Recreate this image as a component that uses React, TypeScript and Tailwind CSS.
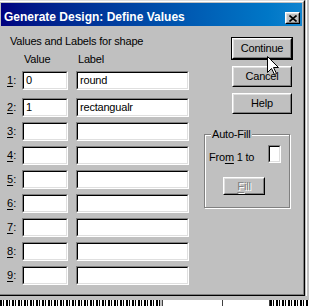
import React from "react";

const font = { fontFamily: '"Liberation Sans", Arial, sans-serif' };

function Sunken({ className, children }: { className: string; children?: React.ReactNode }) {
  return (
    <div className={`border border-t-[#808080] border-l-[#808080] border-r-white border-b-white ${className}`}>
      <div className="h-full w-full border border-t-black border-l-black border-r-[#dfdfdf] border-b-[#dfdfdf] bg-white pl-[2px] text-[11px] leading-[15px] tracking-[-0.2px] text-black">
        {children}
      </div>
    </div>
  );
}

function Raised({ className, children }: { className: string; children?: React.ReactNode }) {
  return (
    <div className={`border border-t-white border-l-white border-r-black border-b-black ${className}`}>
      <div className="flex h-full w-full items-center justify-center border border-t-[#dfdfdf] border-l-[#dfdfdf] border-r-[#808080] border-b-[#808080] bg-[#c0c0c0] text-[11px] leading-[11px] tracking-[-0.2px] text-black">
        {children}
      </div>
    </div>
  );
}

const rows = [
  { n: "1", v: "0", l: "round" },
  { n: "2", v: "1", l: "rectangualr" },
  { n: "3", v: "", l: "" },
  { n: "4", v: "", l: "" },
  { n: "5", v: "", l: "" },
  { n: "6", v: "", l: "" },
  { n: "7", v: "", l: "" },
  { n: "8", v: "", l: "" },
  { n: "9", v: "", l: "" },
];

function Row({ n, v, l }: { n: string; v: string; l: string }) {
  return (
    <div className="flex h-[19px] items-center">
      <div className="ml-[6px] w-[15px] text-[11px] leading-[11px] text-black">
        <span className="underline underline-offset-[2px]">{n}</span>:
      </div>
      <Sunken className="h-[19px] w-[46px]">{v}</Sunken>
      <Sunken className="ml-[8px] h-[19px] w-[113px]">{l}</Sunken>
    </div>
  );
}

const dots = "bg-[repeating-linear-gradient(90deg,#000_0px,#000_2px,#fff_2px,#fff_3px,#000_3px,#000_4px,#fff_4px,#fff_6px)]";

export default function App() {
  return (
    <div className="relative flex h-[306px] w-[309px] flex-col overflow-hidden bg-[#c0c0c0]" style={font}>
      <div className="flex h-[296px]">
        {/* Dialog */}
        <div className="-ml-[2px] h-[296px] w-[307px] shrink-0 border border-t-[#dfdfdf] border-l-[#dfdfdf] border-r-black border-b-black">
          <div className="flex h-full w-full flex-col border border-t-white border-l-white border-r-[#808080] border-b-[#808080] p-px">
            {/* Title bar */}
            <div className="flex h-[23px] items-start justify-between bg-gradient-to-r from-[#000080] to-[#1084d0]">
              <div className="ml-[3px] mt-[8px] text-[12px] font-bold leading-[12px] text-white">
                Generate Design: Define Values
              </div>
              <div className="mr-[2px] mt-[9px]">
                <Raised className="h-[12px] w-[15px]">
                  <svg width="8" height="7" viewBox="0 0 8 7">
                    <path d="M0.5 0.5 L7.5 6.5 M7.5 0.5 L0.5 6.5" stroke="black" strokeWidth="1.6" />
                  </svg>
                </Raised>
              </div>
            </div>
            {/* Body */}
            <div className="flex flex-1">
              {/* Left column */}
              <div className="flex w-[203px] flex-col">
                <div className="ml-[9px] mt-[10px] text-[11px] leading-[11px] tracking-[-0.2px] text-black">
                  Values and Labels for shape
                </div>
                <div className="mt-[7px] flex text-[11px] leading-[11px] tracking-[-0.2px] text-black">
                  <span className="ml-[23px] w-[54px]">Value</span>
                  <span>Label</span>
                </div>
                <div className="mt-[6px] flex flex-col">
                  <div className="mb-[8px]">
                    <Row {...rows[0]} />
                  </div>
                  <div className="flex flex-col gap-[5px]">
                    {rows.slice(1).map((r) => (
                      <Row key={r.n} {...r} />
                    ))}
                  </div>
                </div>
              </div>
              {/* Right column */}
              <div className="flex flex-col">
                <div className="ml-[27px] mt-[11px] h-[23px] w-[62px] border border-black">
                  <Raised className="h-[21px] w-[60px]">Continue</Raised>
                </div>
                <Raised className="ml-[28px] mt-[6px] h-[21px] w-[60px]">Cancel</Raised>
                <Raised className="ml-[28px] mt-[6px] h-[21px] w-[60px]">Help</Raised>
                <div className="relative mt-[20px] h-[74px] w-[86px] border border-[#808080] shadow-[inset_1px_1px_0_#fff,1px_1px_0_#fff]">
                  <span className="absolute left-[6px] top-[-6.5px] bg-[#c0c0c0] px-[1px] text-[11px] leading-[11px] tracking-[-0.2px] text-black">
                    Auto-Fill
                  </span>
                  <div className="flex items-end pl-[4px] pt-[10px]">
                    <span className="w-[59px] text-[11px] leading-[11px] tracking-[-0.2px] text-black">
                      Fro<span className="underline underline-offset-[2px]">m</span> 1 to
                    </span>
                    <Sunken className="h-[18px] w-[13px]" />
                  </div>
                  <Raised className="ml-[18px] mt-[14px] h-[18px] w-[42px]">
                    <span className="text-[#808080] [text-shadow:1px_1px_0_#fff]">
                      <span className="underline underline-offset-[2px]">F</span>ill
                    </span>
                  </Raised>
                </div>
              </div>
            </div>
          </div>
        </div>
        {/* Right background strip */}
        <div className="ml-px flex-1 border-l border-white" />
      </div>
      {/* Bottom background strip: the cut-off tops of a window behind */}
      <div className="flex h-[10px] flex-col">
        <div className="h-[4px]" />
        <div className="flex h-[6px]">
          <div className={`w-[160px] ${dots}`} />
          <div className="w-[2px] bg-[#c0c0c0]" />
          <div className="w-px bg-[#404040]" />
          <div className="w-[59px] bg-white" />
          <div className="w-px bg-[#404040]" />
          <div className="w-[46px] bg-white" />
          <div className="w-px bg-[#404040]" />
          <div className={`flex-1 ${dots}`} />
        </div>
      </div>
      {/* Mouse cursor */}
      <svg className="absolute left-[267px] top-[56px]" width="13" height="20" viewBox="0 0 13 20">
        <polygon
          points="0.5,0.5 0.5,16.5 4.5,12.5 7.5,18.5 9.5,17.5 6.5,11.5 11.5,11.5"
          fill="white"
          stroke="black"
          strokeWidth="1"
        />
      </svg>
    </div>
  );
}
